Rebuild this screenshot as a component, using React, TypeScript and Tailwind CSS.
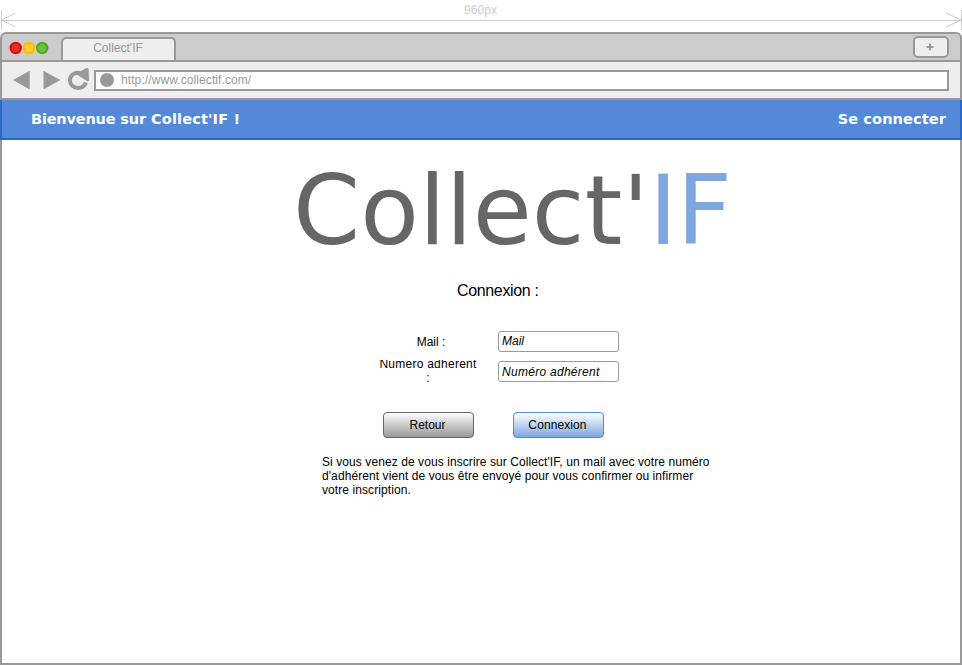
import React from "react";

function Ruler() {
  return (
    <div className="relative h-8 text-[#cccccc]">
      <svg className="block" width="962" height="32" viewBox="0 0 962 32" fill="none" stroke="#cccccc">
        <path d="M1.5 10V30M961.5 10V30" />
        <path d="M2 20.500H961" />
        <path d="M15.500 13L1.500 20L15.500 27M946.500 13L961 20L946.500 27" />
      </svg>
      <span className="absolute left-[464px] top-[2px] text-[12px] leading-[16px] tracking-[0.100px]">960px</span>
    </div>
  );
}

function TabStrip() {
  return (
    <div className="flex h-[30px] items-start rounded-t-[6px] border-2 border-[#999999] bg-[#cccccc]">
      <svg className="mt-[7px] ml-[7px] block" width="40" height="14" viewBox="0 0 40 14" strokeWidth="2">
        <circle cx="6.700" cy="7" r="5.200" fill="#e2302b" stroke="#d90b0b" />
        <circle cx="20" cy="7" r="5.200" fill="#ffcc33" stroke="#ffbb00" />
        <circle cx="33.200" cy="7" r="5.200" fill="#6fbe44" stroke="#4aad1d" />
      </svg>
      <div className="mt-[3px] ml-[12px] h-[23px] w-[115px] rounded-t-[5px] border-2 border-b-0 border-[#999999] bg-[#eeeeee] pr-[1px] text-center text-[12px] leading-[18px] text-[#999999]">
        Collect'IF
      </div>
      <div className="mt-[2px] mr-[11px] ml-auto flex h-[22px] w-[36px] items-center justify-center rounded-[5px] border-2 border-[#999999] bg-[#eeeeee] pr-[2px]">
        <svg width="8" height="8" viewBox="0 0 8 8" stroke="#999999" strokeWidth="2">
          <path d="M0.500 4H7.500M4 0.500V7.500" />
        </svg>
      </div>
    </div>
  );
}

function AddressBar() {
  return (
    <div className="flex h-[38px] items-start border-x-2 border-b-2 border-[#999999] bg-[#eeeeee]">
      <svg className="block" width="92" height="36" viewBox="2 62 92 36" fill="#999999">
        <path d="M13 80L29.700 70.800V89.500ZM43.500 70.800L60.300 80L43.500 89.500Z" />
        <path d="M81 73.400C75 71 69.900 75.500 69.900 80.300C69.900 84.800 73.500 88 78 88C82 88 84.800 86 85.800 82.500" fill="none" stroke="#999999" strokeWidth="4" />
        <path d="M75.500 73.800L86.200 68.200Q88.600 67.300 88.700 69.800L89 79.500Q89 82 87 81Z" />
      </svg>
      <div className="mt-2 flex h-[21px] w-[855px] items-center border-2 border-[#999999] bg-white">
        <div className="-mt-[1px] ml-[4px] h-[14px] w-[14px] rounded-full bg-[#999999]" />
        <span className="-mt-[2px] ml-[7px] text-[12px] leading-[16px] tracking-[0.090px] text-[#999999]">http://www.collectif.com/</span>
      </div>
    </div>
  );
}

function Header() {
  return (
    <div className="flex h-10 justify-between border-x-2 border-b-2 border-[#2a69c8] bg-[#5389d8] pr-[14px] pl-[29px] font-['DejaVu_Sans',sans-serif] text-[14.5px] leading-[38px] font-bold text-white">
      <span className="whitespace-nowrap">
        <span className="tracking-[-0.170px]">Bienvenue </span>
        <span className="tracking-[-0.100px]">sur </span>
        <span className="tracking-[0.150px]">Collect'IF </span>!
      </span>
      <span className="tracking-[0.120px]">Se connecter</span>
    </div>
  );
}

function LoginForm() {
  return (
    <div className="h-[525px] border-x-2 border-b-2 border-[#999999] bg-white">
      <h1 className="ml-[291px] h-[134px] pt-[15px] font-['DejaVu_Sans',sans-serif] text-[96px] leading-[112px] tracking-[0.130px] whitespace-nowrap text-[#666666]">
        Collect'<span className="tracking-[-0.500px] text-[#7ea6e0]">IF</span>
      </h1>
      <h2 className="ml-[455px] h-[57px] pt-[7px] text-[16px] leading-[20px] tracking-[-0.350px]">Connexion :</h2>
      <div className="ml-[376px] flex h-[30px] text-[12px]">
        <label className="w-[106px] pt-[3px] text-center leading-[16px]">Mail :</label>
        <div className="ml-[14px] h-[21px] w-[121px] rounded-[3px] border border-[#999999] pl-[3px] leading-[18px] italic">Mail</div>
      </div>
      <div className="ml-[376px] flex h-[51px] text-[12px]">
        <label className="-mt-[1px] h-[25px] w-[100px] overflow-hidden text-center leading-[14px] tracking-[0.250px]">
          <span className="-mt-[3px] block">Numero adherent<br />:</span>
        </label>
        <div className="ml-[20px] h-[21px] w-[121px] rounded-[3px] border border-[#999999] pl-[3px] leading-[20px] tracking-[0.280px] italic">Numéro adhérent</div>
      </div>
      <div className="ml-[381px] flex h-[43px] gap-[39px] text-[12px]">
        <button className="block h-[26px] w-[91px] rounded-[4px] border border-[#666666] bg-linear-to-b from-white to-[#999999] pr-[2px] leading-[24px]">Retour</button>
        <button className="block h-[26px] w-[91px] rounded-[4px] border border-[#5389d8] bg-linear-to-b from-white to-[#7ea6e0] pr-[2px] leading-[24px] tracking-[0.100px]">Connexion</button>
      </div>
      <p className="ml-[320px] text-[12px] leading-[14px] tracking-[0.080px] whitespace-nowrap">
        Si vous venez de vous inscrire sur Collect'IF, un mail avec votre numéro<br />
        d'adhérent vient de vous être envoyé pour vous confirmer ou infirmer<br />
        votre inscription.
      </p>
    </div>
  );
}

export default function App() {
  return (
    <div className="h-[665px] w-[962px] overflow-hidden bg-white font-['Liberation_Sans',Arial,sans-serif] text-black">
      <Ruler />
      <TabStrip />
      <AddressBar />
      <Header />
      <LoginForm />
    </div>
  );
}
